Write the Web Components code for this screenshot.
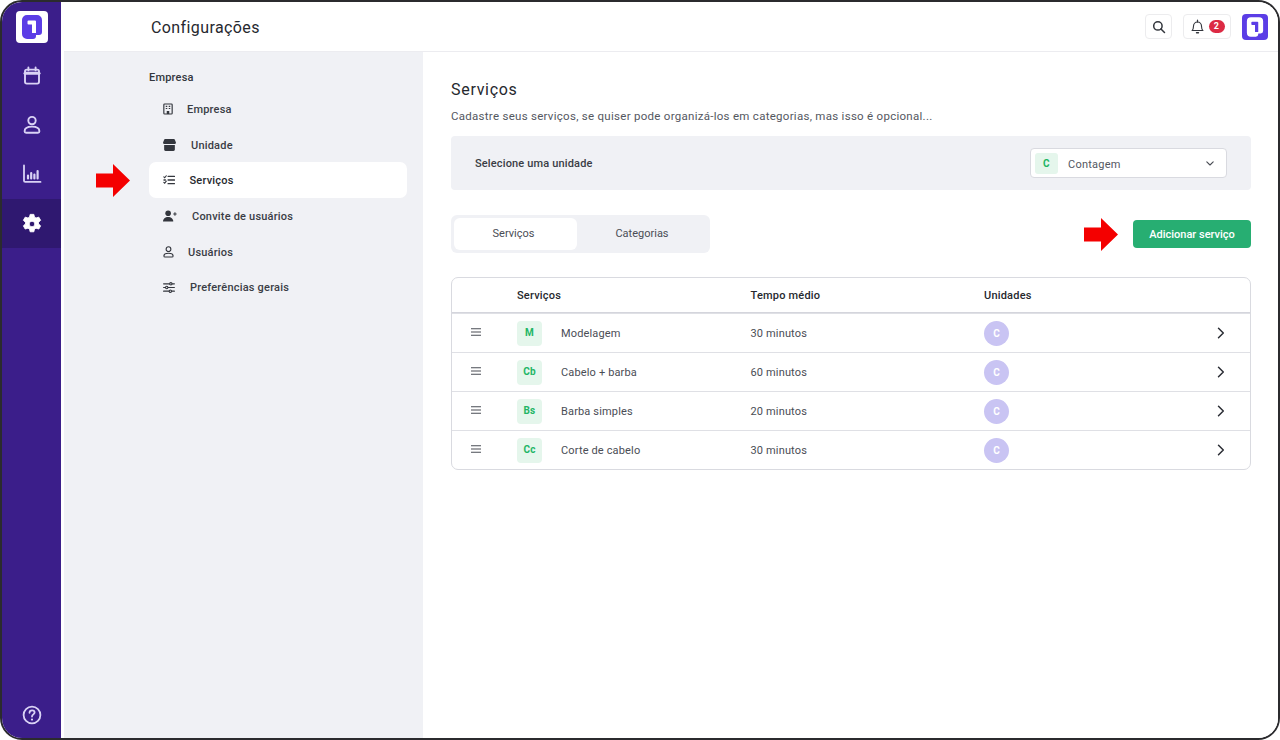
<!DOCTYPE html>
<html lang="pt-BR">
<head>
<meta charset="utf-8">
<title>Configurações</title>
<style>
  html, body { margin: 0; padding: 0; background: #fff; }
  body { font-family: Roboto, "Liberation Sans", sans-serif; color: #33363d; letter-spacing: .2px; }
</style>
</head>
<body>
<app-shell>
  <side-rail slot="rail"></side-rail>
  <top-bar slot="top" heading="Configurações"></top-bar>
  <settings-nav slot="nav"></settings-nav>
  <services-page slot="page"></services-page>
</app-shell>

<script>
const ICONS = {
  calendar: '<svg viewBox="0 0 20 20" width="20" height="20" fill="none" stroke="currentColor" stroke-width="1.9" stroke-linejoin="round" stroke-linecap="round"><rect x="3" y="3.6" width="14" height="14" rx="1.8"/><path d="M3 7.2h14" stroke-width="3"/><path d="M6.4 1.4v3M13.6 1.4v3"/></svg>',
  person: '<svg viewBox="0 0 20 20" width="20" height="20" fill="none" stroke="currentColor" stroke-width="1.9" stroke-linejoin="round"><circle cx="10" cy="5.6" r="3.7"/><path d="M2.6 16.2c0-3 3-4.6 7.4-4.6s7.4 1.6 7.4 4.6c0 1-.6 1.5-1.5 1.5H4.100c-.9 0-1.500-.5-1.500-1.500z"/></svg>',
  chart: '<svg viewBox="0 0 20 20" width="20" height="20" fill="none" stroke="currentColor" stroke-linecap="round"><path d="M2 1.500v15.200c0 .8.400 1.200 1.200 1.200H18.500" stroke-width="1.800"/><path d="M6 11.500v3M9.200 9v5.500M12.400 10.500v4M15.600 7v7.500" stroke-width="2.200"/></svg>',
  gear: '<svg viewBox="0 0 24 24" width="22" height="22" fill="currentColor"><path fill-rule="evenodd" stroke="currentColor" stroke-width="1" stroke-linejoin="round" d="M10 1.500h4l.7 3.100c.6.200 1.200.5 1.700.9l3-1 2 3.500-2.300 2.100c.1.600.1 1.200 0 1.800l2.300 2.100-2 3.500-3-1c-.5.400-1.100.7-1.700.9l-.7 3.100h-4l-.7-3.100c-.6-.2-1.200-.5-1.700-.9l-3 1-2-3.500 2.300-2.100c-.1-.6-.1-1.200 0-1.800L2.600 8l2-3.500 3 1c.5-.4 1.100-.7 1.700-.9zM12 8.900a3.100 3.100 0 1 0 0 6.200 3.100 3.100 0 0 0 0-6.200z"/></svg>',
  help: '<svg viewBox="0 0 20 20" width="20" height="20" fill="none" stroke="currentColor" stroke-width="1.800" stroke-linecap="round"><circle cx="10" cy="10" r="8.400"/><path d="M7.500 7.800c0-1.500 1.100-2.500 2.600-2.500s2.500 1 2.500 2.200c0 1.900-2.600 1.900-2.600 4"/><path d="M10 14.500v.1" stroke-width="2.200"/></svg>',
  search: '<svg viewBox="0 0 14 14" width="14" height="14" fill="none" stroke="#33363d" stroke-width="1.500" stroke-linecap="round"><circle cx="5.900" cy="5.900" r="4.200"/><path d="M9 9l3.500 3.500"/></svg>',
  bell: '<svg viewBox="0 0 16 16" width="15" height="15" fill="none" stroke="#33363d" stroke-width="1.200" stroke-linejoin="round" stroke-linecap="round"><path d="M2.200 12.300c1-1 1.500-2 1.500-4.300 0-2.700 1.800-4.800 4.300-4.800s4.300 2.100 4.300 4.800c0 2.300.5 3.300 1.500 4.300z"/><path d="M8 1.200v2"/><path d="M7 14.600h2" stroke-width="1.600"/></svg>',
  building: '<svg viewBox="0 0 12 14" width="10" height="12" fill="none" stroke="#33363d" stroke-width="1.400"><rect x="1" y="1" width="10" height="12" rx="1"/><path d="M3.300 3.800h1.800M6.900 3.800h1.800M3.300 6.400h1.800M6.900 6.400h1.800" stroke-width="1.400"/><path d="M4.500 13V9.500h3V13" fill="#33363d" stroke="none"/></svg>',
  store: '<svg viewBox="0 0 14 13" width="13" height="12" fill="#33363d"><path d="M2.200 0h9.600c.5 0 .9.300 1 .7L14 3.800c0 1.100-.8 1.700-1.600 1.700H1.600C.8 5.500 0 4.900 0 3.800L1.200.7c.1-.4.500-.7 1-.7z"/><path d="M1.200 6.500h11.600v5c0 .8-.6 1.500-1.500 1.500H2.700c-.9 0-1.500-.7-1.500-1.500z"/></svg>',
  checklist: '<svg viewBox="0 0 13 11" width="12" height="10" fill="none" stroke="#33363d" stroke-linecap="round"><path d="M.8 2l1 1 1.700-2.200M.8 8l1 1 1.700-2.200" stroke-width="1.200"/><path d="M5.500 1.500h7M5.500 5.500h7M5.500 9.500h7M1 5.500h1.500" stroke-width="1.500"/></svg>',
  invite: '<svg viewBox="0 0 15 12" width="14" height="12" fill="#33363d"><circle cx="5.500" cy="3" r="3"/><path d="M0 12c0-3.200 2.300-5 5.500-5s5.500 1.800 5.500 5z"/><path d="M11 3.800h3.600M12.800 2v3.600" stroke="#33363d" stroke-width="1.100"/></svg>',
  user: '<svg viewBox="0 0 12 13" width="11" height="12" fill="none" stroke="#33363d" stroke-width="1.200"><circle cx="6" cy="3.400" r="2.600"/><path d="M1 10.800c0-1.900 2-2.900 5-2.900s5 1 5 2.900c0 .7-.4 1.200-1.200 1.200H2.200c-.8 0-1.200-.5-1.200-1.200z"/></svg>',
  sliders: '<svg viewBox="0 0 13 12" width="12" height="11" fill="none" stroke="#33363d" stroke-width="1.200" stroke-linecap="round"><path d="M.6 2h11.800M.6 6h11.800M.6 10h11.800"/><circle cx="8.500" cy="2" r="1.300" fill="#f0f1f5"/><circle cx="4" cy="6" r="1.300" fill="#f0f1f5"/><circle cx="8" cy="10" r="1.300" fill="#f0f1f5"/></svg>',
  drag: '<svg viewBox="0 0 10 8" width="10" height="8" fill="none" stroke="#4a4d55" stroke-width="1.100"><path d="M0 .8h10M0 4h10M0 7.200h10"/></svg>',
  chevron: '<svg viewBox="0 0 8 12" width="8" height="12" fill="none" stroke="#2c2f36" stroke-width="1.500" stroke-linecap="round" stroke-linejoin="round"><path d="M1.500 1.200L6.300 6l-4.800 4.800"/></svg>',
  caret: '<svg viewBox="0 0 8 5" width="8" height="5" fill="none" stroke="#4a4d55" stroke-width="1.100" stroke-linecap="round" stroke-linejoin="round"><path d="M.8.800L4 4l3.200-3.200"/></svg>',
  arrow: '<svg viewBox="0 0 34 33" width="34" height="33" fill="#f40000"><path d="M0 9.500h17V0l17 16.500L17 33v-9.500H0z"/></svg>'
};

// Company mark: stepped rounded block with a "1" knocked out
function logoMark(size, bg, fg, radius) {
  return `<svg viewBox="0 0 32 32" width="${size}" height="${size}" style="display:block">
    <rect width="32" height="32" rx="${radius}" fill="${bg}"/>
    <path d="M6 9a5 5 0 0 1 5-5h10a5 5 0 0 1 5 5v12a3 3 0 0 1-3 3h-3v1a3 3 0 0 1-3 3h-6a5 5 0 0 1-5-5z" fill="${fg}"/>
    <path d="M12.500 9.500h6.500a1 1 0 0 1 1 1V22h-4V13.500h-3.500a1 1 0 0 1-1-1v-2a1 1 0 0 1 1-1z" fill="${bg}"/>
  </svg>`;
}

class AppShell extends HTMLElement {
  constructor() {
    super();
    this.attachShadow({ mode: 'open' });
    this.shadowRoot.innerHTML = `
      <style>
        :host { display: block; width: 1280px; height: 740px; background: #fff; }
        .frame { box-sizing: border-box; width: 1280px; height: 740px; border: 2px solid #2b2b2e; border-radius: 22px;
          overflow: hidden; display: grid; grid-template-columns: 59px 3px 359px 1fr; grid-template-rows: 50px 1fr; background: #fff; }
        .rail { grid-row: 1 / 3; grid-column: 1; display: flex; }
        .line { grid-row: 1 / 3; grid-column: 2; }
        .top { grid-row: 1; grid-column: 3 / 5; display: flex; }
        .nav { grid-row: 2; grid-column: 3; display: flex; }
        .page { grid-row: 2; grid-column: 4; display: flex; }
      </style>
      <div class="frame">
        <div class="rail"><slot name="rail"></slot></div>
        <div class="line"></div>
        <div class="top"><slot name="top"></slot></div>
        <div class="nav"><slot name="nav"></slot></div>
        <div class="page"><slot name="page"></slot></div>
      </div>`;
  }
}

class SideRail extends HTMLElement {
  constructor() {
    super();
    this.attachShadow({ mode: 'open' });
    this.shadowRoot.innerHTML = `
      <style>
        :host { display: flex; flex-direction: column; width: 59px; background: #3b1e8a; color: #d9d2f5; }
        .logo { height: 40px; padding-top: 9px; display: flex; justify-content: center; }
        .item { height: 49.200px; display: flex; align-items: center; justify-content: center; }
        .item.on { background: #2f1870; color: #fff; }
        .item.on svg { margin-top: 1px; }
        .spacer { flex: 1; }
        .help { height: 33px; display: flex; justify-content: center; }
      </style>
      <div class="logo">${logoMark(32, '#fff', '#5b3de6', 4)}</div>
      <div class="item">${ICONS.calendar}</div>
      <div class="item">${ICONS.person}</div>
      <div class="item">${ICONS.chart}</div>
      <div class="item on">${ICONS.gear}</div>
      <div class="spacer"></div>
      <div class="help">${ICONS.help}</div>`;
  }
}

class TopBar extends HTMLElement {
  constructor() {
    super();
    this.attachShadow({ mode: 'open' });
    this.shadowRoot.innerHTML = `
      <style>
        :host { flex: 1; display: flex; align-items: center; box-sizing: border-box; height: 50px; padding: 0 10px 0 87px;
          border-bottom: 1px solid #ececf0; background: #fff; }
        h1 { margin: 2px 0 0; flex: 1; font: 400 16px/20px Roboto, "Liberation Sans", sans-serif; letter-spacing: .4px; color: #26282e; }
        .btn { box-sizing: border-box; height: 25px; display: flex; align-items: center; justify-content: center;
          border: 1px solid #ececee; border-radius: 4px; }
        .search { width: 27px; margin-right: 11px; }
        .bell { width: 48px; gap: 4px; margin-right: 11px; }
        .count { width: 16px; height: 13px; border-radius: 7px; background: #dc2a44; color: #fff;
          font: 700 9px/13px Roboto, "Liberation Sans", sans-serif; text-align: center; }
        .logo { margin-top: 1px; }
      </style>
      <h1></h1>
      <div class="btn search">${ICONS.search}</div>
      <div class="btn bell">${ICONS.bell}<span class="count">2</span></div>
      <div class="logo">${logoMark(26, '#5b3de6', '#fff', 5)}</div>`;
    this.shadowRoot.querySelector('h1').textContent = this.getAttribute('heading');
  }
}

class NavItem extends HTMLElement {
  constructor() {
    super();
    this.attachShadow({ mode: 'open' });
    this.shadowRoot.innerHTML = `
      <style>
        :host { display: flex; align-items: center; box-sizing: border-box; height: 35.700px; border-radius: 7px;
          padding: 2px 0 0 14px; font: 500 11px/14px Roboto, "Liberation Sans", sans-serif; color: #3a3d45; position: relative; }
        :host([active]) { background: #fff; color: #26282e; }
        .ico { display: flex; align-items: center; margin-top: -2px; }
        .arrow { position: absolute; left: -53px; top: 2px; display: none; }
        :host([active]) .arrow { display: block; }
      </style>
      <span class="arrow">${ICONS.arrow}</span>
      <span class="ico"></span><slot></slot>`;
  }

  connectedCallback() {
    const ico = this.shadowRoot.querySelector('.ico');
    ico.innerHTML = ICONS[this.getAttribute('icon')];
    ico.style.width = this.getAttribute('label-at') + 'px';
  }
}

class SettingsNav extends HTMLElement {
  constructor() {
    super();
    this.attachShadow({ mode: 'open' });
    this.shadowRoot.innerHTML = `
      <style>
        :host { flex: 1; display: block; box-sizing: border-box; background: #f0f1f5; padding: 19px 16px 0 85px; }
        h2 { margin: 0 0 6px; font: 500 11px/14px Roboto, "Liberation Sans", sans-serif; color: #33363d; }
      </style>
      <h2>Empresa</h2>
      <slot></slot>`;
  }

  connectedCallback() {
    const items = [
      ['building', 24, 'Empresa'],
      ['store', 28, 'Unidade'],
      ['checklist', 26.500, 'Serviços', true],
      ['invite', 29, 'Convite de usuários'],
      ['user', 25, 'Usuários'],
      ['sliders', 27, 'Preferências gerais']
    ];
    for (const [icon, at, label, active] of items) {
      const el = document.createElement('nav-item');
      el.setAttribute('icon', icon);
      el.setAttribute('label-at', at);
      if (active) el.setAttribute('active', '');
      el.textContent = label;
      this.appendChild(el);
    }
  }
}

class UnitSelect extends HTMLElement {
  constructor() {
    super();
    this.attachShadow({ mode: 'open' });
    this.shadowRoot.innerHTML = `
      <style>
        :host { box-sizing: border-box; display: flex; align-items: center; width: 197px; height: 30px; padding: 0 12px 0 4px;
          background: #fff; border: 1px solid #d9dae0; border-radius: 4px; font: 400 11px/14px Roboto, "Liberation Sans", sans-serif;
          letter-spacing: .25px; color: #54575f; }
        .tag { width: 23px; height: 21px; margin-right: 10px; border-radius: 3px; background: #e5f6ec; color: #22b565;
          font: 700 10px/21px Roboto, "Liberation Sans", sans-serif; text-align: center; }
        .name { flex: 1; margin-top: 3px; }
        svg { display: block; }
      </style>
      <span class="tag">C</span><span class="name">Contagem</span>${ICONS.caret}`;
  }
}

class TabSwitch extends HTMLElement {
  constructor() {
    super();
    this.attachShadow({ mode: 'open' });
    this.shadowRoot.innerHTML = `
      <style>
        :host { box-sizing: border-box; display: flex; width: 259px; height: 38px; padding: 3px; background: #f0f1f5; border-radius: 6px;
          font: 400 11px/32px Roboto, "Liberation Sans", sans-serif; letter-spacing: 0; color: #4a4d55; text-align: center; }
        div { box-sizing: border-box; width: 123px; border-radius: 6px; }
        .on { background: #fff; padding-right: 4px; }
        .off { flex: 1; }
      </style>
      <div class="on">Serviços</div><div class="off">Categorias</div>`;
  }
}

class ServiceRow extends HTMLElement {
  constructor() {
    super();
    this.attachShadow({ mode: 'open' });
    this.shadowRoot.innerHTML = `
      <style>
        :host { display: grid; grid-template-columns: 65px 233.500px 233.500px 1fr; align-items: center; height: 38px;
          border-top: 1px solid #dfe0e5; font: 400 11px/14px Roboto, "Liberation Sans", sans-serif; letter-spacing: .15px; color: #4a4d55; }
        .drag { padding-left: 19px; margin-top: -3px; display: flex; }
        .svc { display: flex; align-items: center; }
        .name, .time { padding-top: 2px; }
        .tag { width: 25px; height: 25px; margin-right: 19px; border-radius: 4px; background: #e5f6ec; color: #22b565;
          font: 700 10px/23px Roboto, "Liberation Sans", sans-serif; text-align: center; }
        .unit { display: flex; align-items: center; justify-content: space-between; padding-right: 25px; }
        .ava { width: 25px; height: 25px; border-radius: 50%; background: #c9c4f3; color: #fff;
          font: 700 10px/25px Roboto, "Liberation Sans", sans-serif; text-align: center; }
        svg { display: block; }
      </style>
      <div class="drag">${ICONS.drag}</div>
      <div class="svc"><span class="tag"></span><span class="name"></span></div>
      <div class="time"></div>
      <div class="unit"><span class="ava">C</span>${ICONS.chevron}</div>`;
    const r = this.shadowRoot;
    r.querySelector('.tag').textContent = this.getAttribute('tag');
    r.querySelector('.name').textContent = this.getAttribute('name');
    r.querySelector('.time').textContent = this.getAttribute('time');
  }
}

class ServicesTable extends HTMLElement {
  constructor() {
    super();
    this.attachShadow({ mode: 'open' });
    this.shadowRoot.innerHTML = `
      <style>
        :host { display: block; box-sizing: border-box; border: 1px solid #d9dae0; border-radius: 7px; overflow: hidden; }
        .head { display: grid; grid-template-columns: 65px 233.500px 233.500px 1fr; align-items: center; box-sizing: content-box; height: 32px; padding-top: 2px;
          font: 500 11px/14px Roboto, "Liberation Sans", sans-serif; color: #26282e; border-bottom: 1px solid #d4d5dc; }
      </style>
      <div class="head"><span></span><span>Serviços</span><span>Tempo médio</span><span>Unidades</span></div>
      <slot></slot>`;
  }
}

class ServicesPage extends HTMLElement {
  constructor() {
    super();
    this.attachShadow({ mode: 'open' });
    this.shadowRoot.innerHTML = `
      <style>
        :host { flex: 1; display: block; box-sizing: border-box; padding: 28px 27px 0 28px; background: #fff; }
        h2 { margin: 0; font: 400 16px/20px Roboto, "Liberation Sans", sans-serif; letter-spacing: .7px; color: #26282e; }
        p { margin: 8px 0 0; font: 400 11.500px/16px Roboto, "Liberation Sans", sans-serif; letter-spacing: .28px; color: #54575f; }
        .pick { display: flex; align-items: center; justify-content: space-between; box-sizing: border-box; height: 54px; margin-top: 12px;
          padding: 0 24px; background: #f0f1f5; border-radius: 4px; font: 500 11px/14px Roboto, "Liberation Sans", sans-serif; letter-spacing: .15px; color: #3a3d45; }
        .pick > span { padding-top: 2px; }
        .bar { display: flex; align-items: center; justify-content: space-between; margin-top: 25px; }
        .actions { display: flex; align-items: center; gap: 15px; }
        .actions svg { display: block; }
        button { box-sizing: border-box; width: 118px; height: 28px; padding: 1px 0 0; border: 0; border-radius: 4px; background: #27ae72; color: #fff;
          font: 500 11px/27px Roboto, "Liberation Sans", sans-serif; letter-spacing: 0; }
        services-table { margin-top: 24px; }
      </style>
      <h2>Serviços</h2>
      <p>Cadastre seus serviços, se quiser pode organizá-los em categorias, mas isso é opcional...</p>
      <div class="pick"><span>Selecione uma unidade</span><unit-select></unit-select></div>
      <div class="bar"><tab-switch></tab-switch><div class="actions">${ICONS.arrow}<button>Adicionar serviço</button></div></div>
      <services-table>
        <service-row tag="M" name="Modelagem" time="30 minutos"></service-row>
        <service-row tag="Cb" name="Cabelo + barba" time="60 minutos"></service-row>
        <service-row tag="Bs" name="Barba simples" time="20 minutos"></service-row>
        <service-row tag="Cc" name="Corte de cabelo" time="30 minutos"></service-row>
      </services-table>`;
  }
}

customElements.define('nav-item', NavItem);
customElements.define('side-rail', SideRail);
customElements.define('top-bar', TopBar);
customElements.define('settings-nav', SettingsNav);
customElements.define('unit-select', UnitSelect);
customElements.define('tab-switch', TabSwitch);
customElements.define('service-row', ServiceRow);
customElements.define('services-table', ServicesTable);
customElements.define('services-page', ServicesPage);
customElements.define('app-shell', AppShell);
</script>
</body>
</html>
